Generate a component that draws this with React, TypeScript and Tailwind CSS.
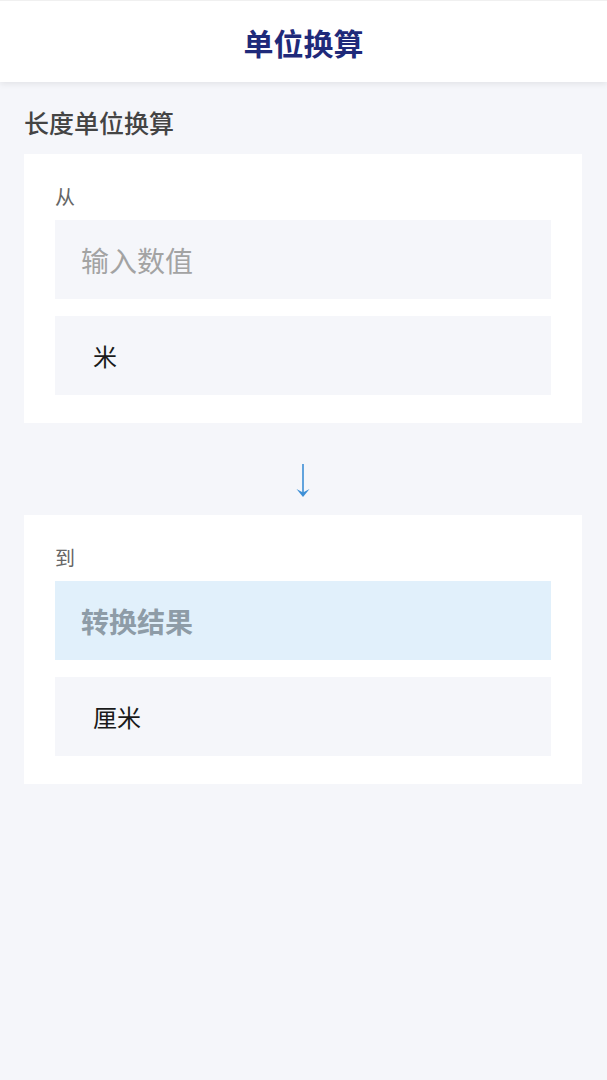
import React, { useState } from 'react';

const font = { fontFamily: '"Noto Sans CJK SC", "Noto Sans", sans-serif' };

// 向下箭头
const ArrowDown: React.FC = () => (
  <svg width="16" height="34" viewBox="0 0 16 34" fill="none">
    <line x1="8" y1="0" x2="8" y2="30" stroke="#3d8fd6" strokeWidth="1.6" />
    <path d="M1.5 25 L8 33 L14.5 25 L8 28.5 Z" fill="#3d8fd6" />
  </svg>
);

interface PickerProps {
  label: string;
}

const UnitPicker: React.FC<PickerProps> = ({ label }) => (
  <div className="h-[79px] bg-[#f5f6fa] flex items-center pl-[38px] text-[24px] text-[#1a1a1a]">
    {label}
  </div>
);

const App: React.FC = () => {
  const [value, setValue] = useState('');

  return (
    <div className="min-h-screen bg-[#f5f6fa]" style={font}>
      {/* 顶部标题栏 */}
      <div className="h-[82px] bg-white border-t border-[#f0f0f0] shadow-[0_2px_6px_rgba(0,0,0,0.08)] flex items-center justify-center">
        <h1 className="text-[30px] font-bold text-[#1f2a7a] leading-none">单位换算</h1>
      </div>

      <div className="pl-[24px] pr-[25px]">
        <div className="mt-[24px] mb-[16px] text-[25px] leading-[32px] font-medium text-[#444]">长度单位换算</div>

        {/* 从 */}
        <div className="bg-white px-[31px] pt-[30px] pb-[28px]">
          <div className="text-[20px] leading-[26px] text-[#666] mb-[10px]">从</div>
          <input
            value={value}
            onChange={(e) => setValue(e.target.value)}
            placeholder="输入数值"
            className="w-full h-[79px] bg-[#f5f6fa] pl-[26px] text-[28px] text-[#222] outline-none placeholder:text-[#a3a3a3]"
          />
          <div className="h-[17px]" />
          <UnitPicker label="米" />
        </div>

        <div className="h-[92px] flex justify-center pt-[41px]">
          <ArrowDown />
        </div>

        {/* 到 */}
        <div className="bg-white px-[31px] pt-[30px] pb-[28px]">
          <div className="text-[20px] leading-[26px] text-[#666] mb-[10px]">到</div>
          <div className="h-[79px] bg-[#e1f0fb] flex items-center pl-[26px] text-[28px] font-bold text-[#8e9ca7]">
            {value ? value : '转换结果'}
          </div>
          <div className="h-[17px]" />
          <UnitPicker label="厘米" />
        </div>
      </div>
    </div>
  );
};

export default App;
